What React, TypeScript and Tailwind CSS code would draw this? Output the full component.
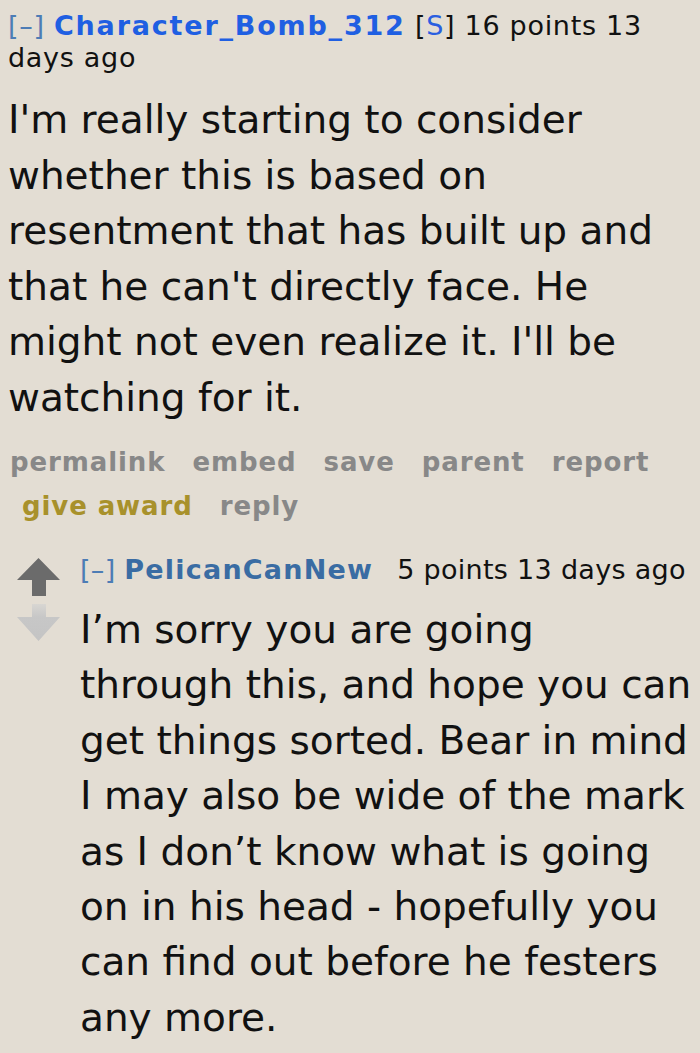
export default function App() {
  return (
    <main className="min-h-[1053px] w-[700px] overflow-hidden bg-[#e3ddd3] text-[#111] [font-family:'DejaVu_Sans',Verdana,sans-serif]">
      {/* Parent comment */}
      <div className="pl-[8px] pt-[10px]">
        <p className="text-[27px] leading-[32px] tracking-[0.7px]">
          <span className="text-[#4d7cb5]">[–]</span>{" "}
          <span className="font-bold tracking-[1.8px] text-[#1f5fe2]">Character_Bomb_312</span>{" "}
          <span>
            [<span className="text-[#2a5ee0]">S</span>]
          </span>{" "}
          16 points 13
          <br />
          days ago
        </p>
        <p className="mt-[18px] text-[39px] leading-[55.5px]">
          I'm really starting to consider
          <br />
          whether this is based on
          <br />
          resentment that has built up and
          <br />
          that he can't directly face. He
          <br />
          might not even realize it. I'll be
          <br />
          watching for it.
        </p>
        <div className="mt-[15px] pl-[2px] text-[26px] leading-[44px] font-bold tracking-[0.9px] text-[#888888]">
          <div className="flex gap-x-[27px]">
            <span>permalink</span>
            <span>embed</span>
            <span>save</span>
            <span>parent</span>
            <span>report</span>
          </div>
          <div className="flex gap-x-[27px] pl-[12px]">
            <span className="text-[#a8912b]">give award</span>
            <span>reply</span>
          </div>
        </div>
      </div>

      {/* Child comment */}
      <div className="mt-[26px] flex pl-[17px]">
        <div className="flex w-[63px] shrink-0 flex-col pt-[4px]">
          <svg width="43" height="38" viewBox="0 0 43 38">
            <polygon points="21.5,0 43,22 29,22 29,38 15,38 15,22 0,22" fill="#6b6b6b" />
          </svg>
          <svg className="mt-[8px]" width="43" height="37" viewBox="0 0 43 37">
            <defs>
              <linearGradient id="dn" x1="0" y1="0" x2="0" y2="1">
                <stop offset="0" stopColor="#d8d6d2" />
                <stop offset="0.35" stopColor="#c7c7c7" />
                <stop offset="1" stopColor="#c4c4c4" />
              </linearGradient>
            </defs>
            <polygon points="15,0 29,0 29,13 43,13 21.5,37 0,13 15,13" fill="url(#dn)" />
          </svg>
        </div>
        <div>
          <p className="text-[27px] leading-[32px] tracking-[0.3px]">
            <span className="text-[#4d7cb5]">[–]</span>{" "}
            <span className="font-bold tracking-[1.2px] text-[#3a6ca3]">PelicanCanNew</span>
            <span className="ml-[24px]">5 points 13 days ago</span>
          </p>
          <p className="mt-[16px] text-[39px] leading-[55.4px]">
            I’m sorry you are going
            <br />
            through this, and hope you can
            <br />
            get things sorted. Bear in mind
            <br />
            I may also be wide of the mark
            <br />
            as I don’t know what is going
            <br />
            on in his head - hopefully you
            <br />
            can find out before he festers
            <br />
            any more.
          </p>
        </div>
      </div>
    </main>
  )
}
